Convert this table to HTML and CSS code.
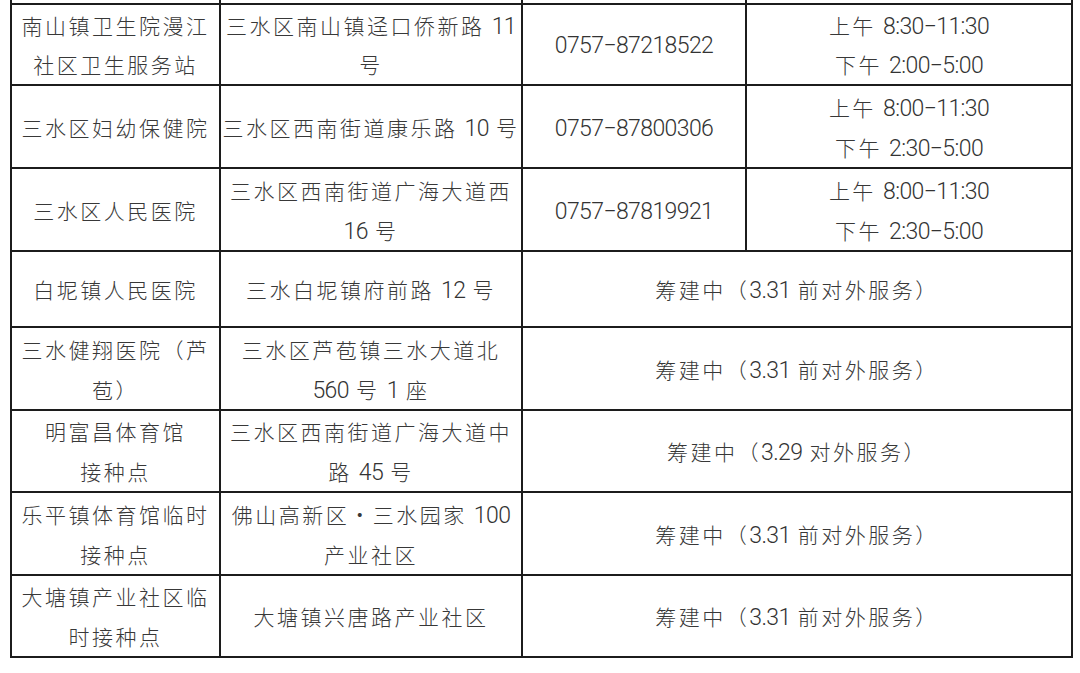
FILE: index.html
```html
<!DOCTYPE html>
<html lang="zh-CN">
<head>
<meta charset="utf-8">
<title>接种点</title>
<link rel="stylesheet" href="styles.css">
</head>
<body>
<table class="sites">
  <colgroup>
    <col class="c1"><col class="c2"><col class="c3"><col class="c4">
  </colgroup>
  <tbody>
    <tr class="cut"><td></td><td></td><td></td><td></td></tr>
    <tr class="first">
      <td>南山镇卫生院漫江<br>社区卫生服务站</td>
      <td>三水区南山镇迳口侨新路 <span class="n">11</span><br>号</td>
      <td><span class="n">0757−87218522</span></td>
      <td>上午 <span class="n">8:30−11:30</span><br>下午 <span class="n">2:00−5:00</span></td>
    </tr>
    <tr>
      <td>三水区妇幼保健院</td>
      <td>三水区西南街道康乐路 <span class="n">10</span> 号</td>
      <td><span class="n">0757−87800306</span></td>
      <td>上午 <span class="n">8:00−11:30</span><br>下午 <span class="n">2:30−5:00</span></td>
    </tr>
    <tr>
      <td>三水区人民医院</td>
      <td>三水区西南街道广海大道西<br><span class="n">16</span> 号</td>
      <td><span class="n">0757−87819921</span></td>
      <td>上午 <span class="n">8:00−11:30</span><br>下午 <span class="n">2:30−5:00</span></td>
    </tr>
    <tr class="short">
      <td>白坭镇人民医院</td>
      <td>三水白坭镇府前路 <span class="n">12</span> 号</td>
      <td colspan="2">筹建中（<span class="n">3.31</span> 前对外服务）</td>
    </tr>
    <tr>
      <td>三水健翔医院（芦<br>苞）</td>
      <td>三水区芦苞镇三水大道北<br><span class="n">560</span> 号 <span class="n">1</span> 座</td>
      <td colspan="2">筹建中（<span class="n">3.31</span> 前对外服务）</td>
    </tr>
    <tr class="slim">
      <td>明富昌体育馆<br>接种点</td>
      <td>三水区西南街道广海大道中<br>路 <span class="n">45</span> 号</td>
      <td colspan="2">筹建中（<span class="n">3.29</span> 对外服务）</td>
    </tr>
    <tr>
      <td>乐平镇体育馆临时<br>接种点</td>
      <td>佛山高新区・三水园家 <span class="n">100</span><br>产业社区</td>
      <td colspan="2">筹建中（<span class="n">3.31</span> 前对外服务）</td>
    </tr>
    <tr class="slim">
      <td>大塘镇产业社区临<br>时接种点</td>
      <td>大塘镇兴唐路产业社区</td>
      <td colspan="2">筹建中（<span class="n">3.31</span> 前对外服务）</td>
    </tr>
  </tbody>
</table>
</body>
</html>
```
FILE: styles.css
```css
html, body {
  margin: 0;
  padding: 0;
  background: #ffffff;
}

.sites {
  margin: -17px 0 0 10px;
  width: 1061px;
  table-layout: fixed;
  border-collapse: collapse;
  font-family: "Noto Sans CJK SC", sans-serif;
  font-weight: 300;
  font-size: 21px;
  letter-spacing: 2.5px;
  color: #383838;
}

.c1 { width: 209px; }
.c2 { width: 302px; }
.c3 { width: 224px; }
.c4 { width: 326px; }

.sites tr { height: 83px; }
.sites tr.cut { height: 20px; }
.sites tr.first { height: 81px; }
.sites tr.short { height: 76px; }
.sites tr.slim { height: 82px; }

.sites td {
  border: 2px solid #1c1c1c;
  padding: 0;
  text-align: center;
  vertical-align: middle;
  line-height: 40px;
  white-space: nowrap;
  overflow: hidden;
}

.sites tr.first td {
  line-height: 39px;
}

.n {
  font-family: Roboto, "Liberation Sans", sans-serif;
  font-weight: 300;
  font-size: 23px;
  line-height: 20px;
  letter-spacing: -0.6px;
  color: #333333;
}
```
